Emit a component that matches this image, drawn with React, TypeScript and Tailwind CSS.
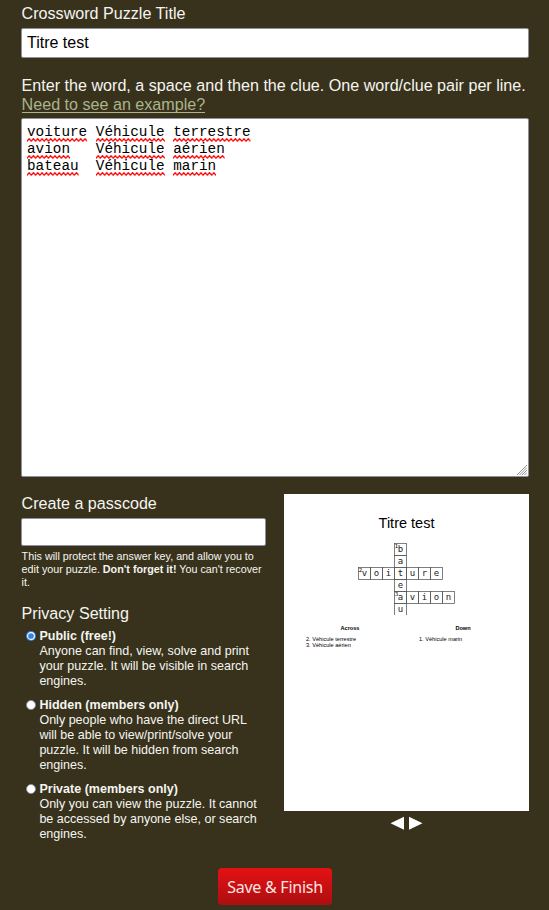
import type { ReactNode } from "react";

const field = "block w-full rounded-[2px] border border-[#8f8f9d] bg-white px-[5px] text-black outline-none";

function Misspelled({ children }: { children: ReactNode }) {
  return (
    <span className="relative inline-block h-[17px]">
      {children}
      <svg className="absolute bottom-[-1px] left-0 h-[4px] w-full">
        <defs>
          <pattern id="squiggle" width="4.3" height="4" patternUnits="userSpaceOnUse">
            <path d="M-2.15 0.7 0 3.1 2.15 0.7 4.3 3.1 6.45 0.7" fill="none" stroke="#f00" strokeWidth="1.3" />
          </pattern>
        </defs>
        <rect width="100%" height="4" fill="url(#squiggle)" />
      </svg>
    </span>
  );
}

const words = [
  ["voiture", " ", "Véhicule", "terrestre"],
  ["avion", "   ", "Véhicule", "aérien"],
  ["bateau", "  ", "Véhicule", "marin"],
];

const options = [
  { title: "Public (free!)", lines: ["Anyone can find, view, solve and print", "your puzzle. It will be visible in search", "engines."] },
  { title: "Hidden (members only)", lines: ["Only people who have the direct URL", "will be able to view/print/solve your", "puzzle. It will be hidden from search", "engines."] },
  { title: "Private (members only)", lines: ["Only you can view the puzzle. It cannot", "be accessed by anyone else, or search", "engines."] },
];

type Cell = { c: number; r: number; l: string; n?: number };
const cells: Cell[] = [
  { c: 3, r: 0, l: "b", n: 1 },
  { c: 3, r: 1, l: "a" },
  { c: 0, r: 2, l: "v", n: 2 },
  { c: 1, r: 2, l: "o" },
  { c: 2, r: 2, l: "i" },
  { c: 3, r: 2, l: "t" },
  { c: 4, r: 2, l: "u" },
  { c: 5, r: 2, l: "r" },
  { c: 6, r: 2, l: "e" },
  { c: 3, r: 3, l: "e" },
  { c: 3, r: 4, l: "a", n: 3 },
  { c: 4, r: 4, l: "v" },
  { c: 5, r: 4, l: "i" },
  { c: 6, r: 4, l: "o" },
  { c: 7, r: 4, l: "n" },
  { c: 3, r: 5, l: "u" },
];

function Crossword() {
  return (
    <svg className="mx-auto block h-[72px] w-[97px]" viewBox="0 0 97 72">
      {cells.map(({ c, r, l, n }) => (
        <g key={`${c}-${r}`}>
          <rect x={c * 12 + 0.5} y={r * 12 + 0.5} width="12" height="12" fill="none" stroke="#555" strokeWidth="0.75" />
          <text x={c * 12 + 6.5} y={r * 12 + 9} textAnchor="middle" fontFamily="DejaVu Sans Mono, monospace" fontSize="9" fill="#222">
            {l}
          </text>
          {n && (
            <text x={c * 12 + 0.8} y={r * 12 + 4.5} fontFamily="DejaVu Sans, sans-serif" fontSize="5.5" fill="#000">
              {n}
            </text>
          )}
        </g>
      ))}
    </svg>
  );
}

export default function App() {
  return (
    <main className="h-[910px] overflow-hidden bg-[#38321d] pt-[4px] pr-[20px] pl-[21px] font-['Liberation_Sans',Arial,sans-serif] text-[16.12px] leading-[19px] text-[#f5f5f0]">
      <label className="block h-[24px] pl-[0.6px]">Crossword Puzzle Title</label>
      <input className={`${field} h-[30px] text-[16px]`} defaultValue="Titre test" />

      <div className="mt-[18px] h-[42px] pl-[0.6px] whitespace-nowrap">
        Enter the word, a space and then the clue. One word/clue pair per line.
        <br />
        <a className="inline-block h-[18px] border-b border-[#abb48b] leading-[19px] text-[#abb48b]">Need to see an example?</a>
      </div>
      <div className={`${field} relative h-[359px] pt-[5px] font-['Liberation_Mono',monospace] text-[14.33px] leading-[17px] whitespace-pre`}>
        {words.map(([word, gap, first, second]) => (
          <div key={word} className="h-[17px]">
            <Misspelled>{word}</Misspelled>
            {gap}
            <Misspelled>{first}</Misspelled> <Misspelled>{second}</Misspelled>
          </div>
        ))}
        <svg className="absolute right-[1px] bottom-[1px] size-[10px]" viewBox="0 0 10 10" stroke="#777" strokeWidth="0.8">
          <path d="M0 10 10 0M2.5 10 10 2.5M5 10 10 5M7.5 10 10 7.5" />
        </svg>
      </div>

      <div className="mt-[17px] flex gap-[18px]">
        <section className="w-[245px] shrink-0">
          <label className="block h-[24px] pl-[0.6px]">Create a passcode</label>
          <input className={`${field} h-[28px]`} />
          <p className="mt-[4px] pl-[0.6px] text-[10.75px] leading-[13px] whitespace-nowrap">
            This will protect the answer key, and allow you to
            <br />
            edit your puzzle. <b>Don't forget it!</b> You can't recover
            <br />
            it.
          </p>
          <h2 className="mt-[15px] pl-[0.6px]">Privacy Setting</h2>
          <div className="mt-[6px] flex flex-col gap-[9px] text-[12.54px] leading-[15px]">
            {options.map(({ title, lines }, index) => (
              <label key={title} className="flex gap-[3.4px] pl-[5px] whitespace-nowrap">
                <svg className="mt-[2px] size-[10px] shrink-0" viewBox="0 0 10 10">
                  {index === 0 ? (
                    <>
                      <circle cx="5" cy="5" r="5" fill="#3584e4" />
                      <circle cx="5" cy="5" r="3.4" fill="#3584e4" stroke="#fff" strokeWidth="1.1" />
                    </>
                  ) : (
                    <circle cx="5" cy="5" r="4.5" fill="#fff" stroke="#8f8f9d" strokeWidth="0.8" />
                  )}
                </svg>
                <span>
                  <b>{title}</b>
                  {lines.map((line) => (
                    <span key={line} className="block">{line}</span>
                  ))}
                </span>
              </label>
            ))}
          </div>
        </section>

        <section className="w-[245px] shrink-0">
          <article className="h-[317px] bg-white pt-[20px] text-black">
            <h1 className="text-center text-[14.5px] leading-[19px]">Titre test</h1>
            <div className="mt-[10px]">
              <Crossword />
            </div>
            <div className="mt-[10px] flex pl-[22px] text-[5.6px] leading-[6px]">
              <div className="w-[113px]">
                <h3 className="mb-[5px] w-[88px] text-center font-bold">Across</h3>
                <p>2. Véhicule terrestre</p>
                <p>3. Véhicule aérien</p>
              </div>
              <div>
                <h3 className="mb-[5px] w-[88px] text-center font-bold">Down</h3>
                <p>1. Véhicule marin</p>
              </div>
            </div>
          </article>
          <svg className="mx-auto mt-[5px] block h-[14px] w-[33px]" viewBox="0 0 33 14" fill="#fff">
            <path d="M0.5 7.3 14 0.8V13.8ZM32.5 7.3 19 0.8V13.8Z" />
          </svg>
        </section>
      </div>

      <button className="mx-auto mt-[26px] block h-[37px] w-[114px] rounded-[4px] bg-linear-to-b from-[#e51114] to-[#ad0e10] pt-[2px] font-['Noto_Sans',sans-serif] text-[16px] tracking-[-0.25px] whitespace-nowrap text-[#fbe4e4]">
        Save &amp; Finish
      </button>
    </main>
  );
}
